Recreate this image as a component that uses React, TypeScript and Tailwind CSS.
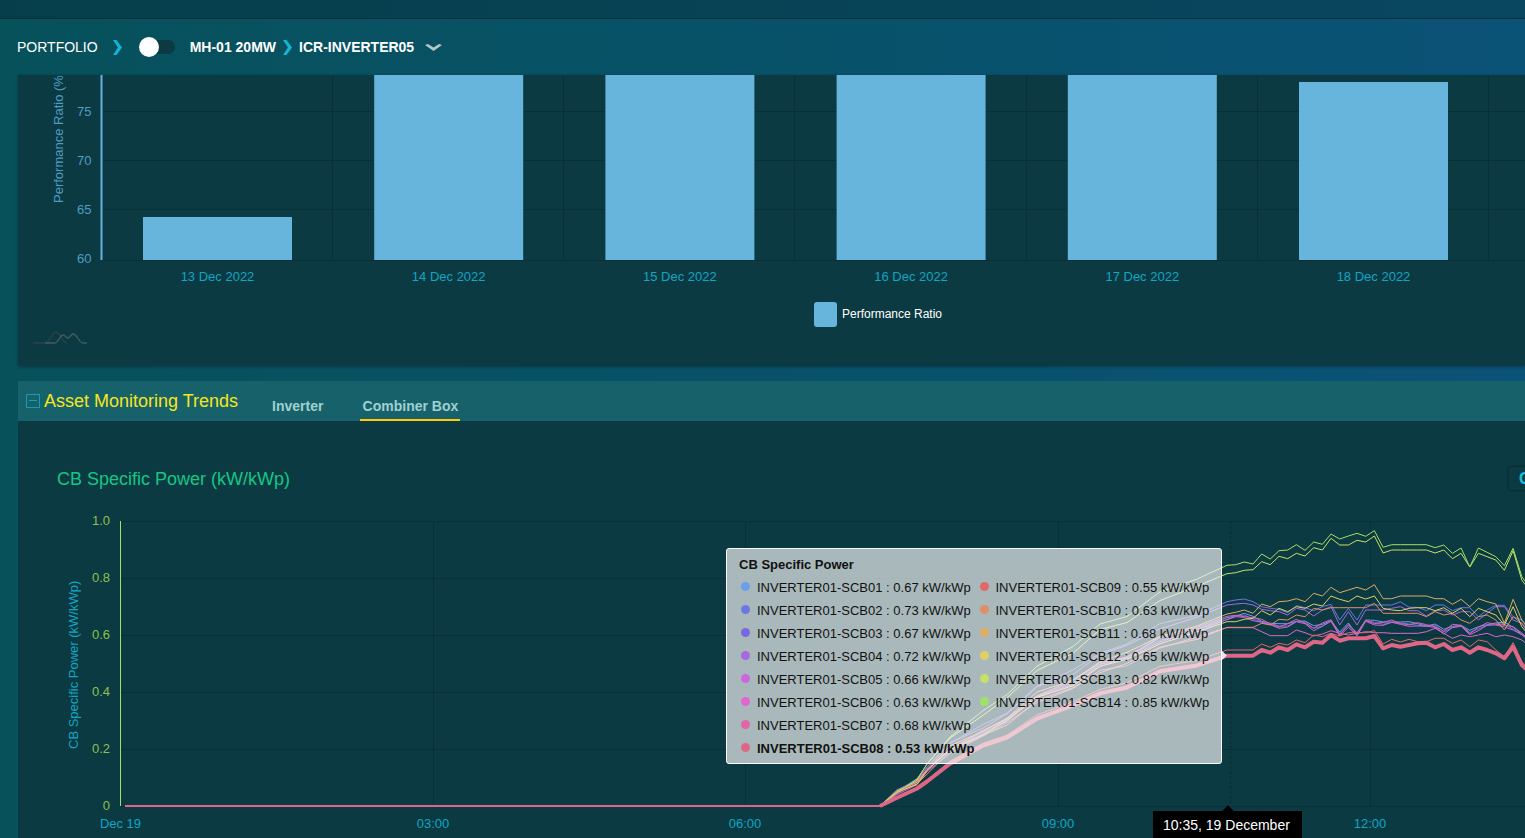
const bars = [
  { label: "13 Dec 2022", x: 143, top: 217 },
  { label: "14 Dec 2022", x: 374.2, top: 70 },
  { label: "15 Dec 2022", x: 605.4, top: 70 },
  { label: "16 Dec 2022", x: 836.6, top: 70 },
  { label: "17 Dec 2022", x: 1067.8, top: 70 },
  { label: "18 Dec 2022", x: 1299, top: 82 },
];

// pixel y of the readings, taken 3x larger from the chart, one every 5 minutes from 10:35
const mid = [470, 466, 464, 470, 480, 490, 495, 490, 480, 485, 500, 490, 480, 520, 490, 520, 480, 485, 485, 482, 488, 488, 488, 495, 495, 510, 495, 495, 515, 500, 490, 490, 490, 500, 520, 540];

const shifted = (dy: number, seed: number) =>
  mid.map((v, i) => Math.round(v + dy + Math.sin(i * 1.7 + seed) * 4));

const series = [
  { name: "INVERTER01-SCB01", value: "0.67", color: "#6d9eeb", dot: "bg-[#6d9eeb]", ys: shifted(0, 1) },
  { name: "INVERTER01-SCB02", value: "0.73", color: "#6a78e0", dot: "bg-[#6a78e0]", ys: [425, 420, 417, 425, 440, 445, 448, 458, 437, 443, 452, 440, 433, 480, 445, 480, 435, 435, 435, 435, 425, 442, 442, 452, 435, 435, 452, 443, 443, 470, 450, 436, 436, 470, 480, 520] },
  { name: "INVERTER01-SCB03", value: "0.67", color: "#7b68e0", dot: "bg-[#7b68e0]", ys: shifted(4, 2) },
  { name: "INVERTER01-SCB04", value: "0.72", color: "#a868e0", dot: "bg-[#a868e0]", ys: [435, 432, 430, 435, 448, 452, 455, 465, 445, 450, 468, 450, 440, 495, 455, 495, 450, 450, 450, 445, 440, 452, 452, 468, 452, 450, 465, 455, 455, 480, 460, 440, 440, 480, 490, 530] },
  { name: "INVERTER01-SCB05", value: "0.66", color: "#cc66e0", dot: "bg-[#cc66e0]", ys: shifted(8, 3) },
  { name: "INVERTER01-SCB06", value: "0.63", color: "#e066d0", dot: "bg-[#e066d0]", ys: [503, 503, 503, 503, 515, 527, 527, 527, 510, 518, 528, 522, 512, 520, 525, 520, 515, 518, 518, 520, 520, 520, 520, 515, 505, 520, 535, 525, 530, 525, 520, 530, 525, 530, 540, 560] },
  { name: "INVERTER01-SCB07", value: "0.68", color: "#e066a8", dot: "bg-[#e066a8]", ys: shifted(2, 4) },
  { name: "INVERTER01-SCB09", value: "0.55", color: "#e06a6a", dot: "bg-[#e06a6a]", ys: [570, 570, 570, 570, 552, 562, 550, 555, 540, 548, 525, 530, 520, 528, 518, 518, 518, 512, 552, 538, 546, 538, 545, 545, 535, 535, 550, 540, 560, 540, 545, 570, 590, 548, 605, 630] },
  { name: "INVERTER01-SCB10", value: "0.63", color: "#e08e66", dot: "bg-[#e08e66]", ys: [502, 502, 502, 502, 490, 495, 478, 480, 465, 470, 445, 450, 443, 443, 443, 443, 443, 430, 460, 460, 460, 460, 460, 470, 455, 465, 460, 480, 490, 470, 465, 480, 510, 470, 490, 520] },
  { name: "INVERTER01-SCB11", value: "0.68", color: "#e0ab66", dot: "bg-[#e0ab66]", ys: [462, 457, 450, 460, 432, 440, 425, 423, 416, 425, 400, 408, 382, 398, 390, 382, 390, 374, 416, 416, 408, 408, 408, 408, 416, 416, 433, 418, 440, 416, 425, 432, 490, 418, 480, 510] },
  { name: "INVERTER01-SCB12", value: "0.65", color: "#e0d066", dot: "bg-[#e0d066]", ys: [485, 485, 478, 475, 452, 465, 445, 455, 440, 445, 432, 438, 408, 418, 425, 408, 417, 408, 445, 450, 452, 445, 443, 443, 452, 443, 460, 445, 470, 445, 455, 465, 495, 440, 500, 530] },
  { name: "INVERTER01-SCB13", value: "0.82", color: "#c8e066", dot: "bg-[#c8e066]", ys: [341, 338, 331, 329, 305, 314, 289, 296, 280, 288, 263, 270, 235, 255, 255, 241, 246, 228, 279, 270, 270, 270, 270, 270, 279, 270, 296, 280, 321, 280, 290, 300, 331, 272, 360, 395] },
  { name: "INVERTER01-SCB14", value: "0.85", color: "#a3e066", dot: "bg-[#a3e066]", ys: [316, 314, 306, 312, 282, 297, 272, 270, 254, 271, 246, 253, 222, 237, 228, 220, 229, 212, 262, 254, 254, 254, 254, 254, 263, 255, 280, 264, 321, 264, 277, 290, 317, 265, 350, 385] },
  { name: "INVERTER01-SCB08", value: "0.53", color: "#e06685", dot: "bg-[#e06685]", bold: true, ys: [587, 587, 587, 587, 570, 578, 562, 570, 553, 562, 545, 548, 525, 542, 535, 535, 535, 528, 565, 555, 560, 555, 550, 548, 562, 552, 570, 562, 578, 562, 570, 580, 595, 560, 615, 640] },
];

const ramp = [
  [880, 806], [897, 797], [917, 790], [927, 781], [950, 763], [983, 747], [1007, 737],
  [1037, 718], [1073, 707], [1100, 693], [1127, 687], [1160, 673], [1197, 665],
];
const bump = [0, 6, 10, 12, 8];

const linePoints = (ys: number[], seed: number) => {
  const start = 460 + ys[0] / 3;
  const spread = (806 - start) / 150 - 1;
  const rising = ramp.map(([x, y], i) => {
    const f = (806 - y) / 150;
    // the lines stay bunched at sunrise and fan out later
    const fan = Math.min(1, Math.max(0, (f - 0.1) / 0.25));
    const rise = 150 * f * (1 + spread * fan) + (bump[i] ?? 0) * Math.min(1, spread * 3);
    const wobble = i === 0 ? 0 : Math.sin(i * 2.1 + seed) * 1.4;
    return `${x},${(806 - rise + wobble).toFixed(1)}`;
  });
  const after = ys.map((v, i) => `${(1227 + i * 8.67).toFixed(1)},${(460 + v / 3).toFixed(1)}`);
  return [...rising, ...after].join(" ");
};

const tooltipOrder = ["01", "02", "03", "04", "05", "06", "07", "08"];
const firstColumn = tooltipOrder.map((n) => series.find((s) => s.name.endsWith(n))!);
const secondColumn = series.filter((s) => s.name >= "INVERTER01-SCB09");

const TooltipRow = ({ item }: { item: (typeof series)[number] }) => (
  <div className={`flex h-[23px] items-center whitespace-nowrap pl-[2px] ${item.bold ? "font-bold" : ""}`}>
    <span className={`mr-[7px] h-[9px] w-[9px] -translate-y-[1px] rounded-full ${item.dot}`} />
    {item.name} : {item.value} kW/kWp
  </div>
);

const Chevron = ({ className }: { className: string }) => (
  <svg width="9" height="15" viewBox="0 0 9 15" className={className}>
    <path d="M0 0h3.500l5.500 7.500-5.500 7.500h-3.500l5-7.500z" fill="#12b5d4" />
  </svg>
);

const PerformanceChart = () => (
  <svg width="1507" height="291" viewBox="18 75 1507 291" className="block">
    {[111, 160, 209, 260].map((y) => (
      <line key={y} x1="102" x2="1525" y1={y + 0.5} y2={y + 0.5} stroke="#0a2f36" />
    ))}
    {[332, 563, 794, 1026, 1257, 1488].map((x) => (
      <line key={x} x1={x + 0.5} x2={x + 0.5} y1="75" y2="260" stroke="#0a2f36" />
    ))}
    <line x1="101.500" x2="101.500" y1="75" y2="260" stroke="#67b5dc" strokeWidth="2" />
    {bars.map((b) => (
      <g key={b.label}>
        <rect x={b.x} y={b.top} width="149" height={260 - b.top} fill="#67b5dc" />
        <text x={b.x + 74.5} y="281" textAnchor="middle" fontSize="13" fill="#12a5c4">
          {b.label}
        </text>
      </g>
    ))}
    {[
      ["75", 116],
      ["70", 165],
      ["65", 214],
      ["60", 263],
    ].map(([label, y]) => (
      <text key={label} x="91.500" y={y} textAnchor="end" fontSize="13" fill="#4f9cc4">
        {label}
      </text>
    ))}
    <text transform="translate(63 203) rotate(-90)" fontSize="13" fill="#4f9cc4">
      Performance Ratio (%)
    </text>
    <rect x="814" y="302" width="23" height="25" rx="3" fill="#67b5dc" />
    <text x="842" y="318" fontSize="12" fill="#ffffff">
      Performance Ratio
    </text>
    <g fill="none" strokeWidth="1.3">
      <path d="M33 343H45C50 343 52 332 56 332C60 332 62 343 67 343" stroke="#2b4349" />
      <path d="M45 343H55C58 343 60 335 63 335C65 335 66 338 68 338C70 338 71 334 73 334C77 334 79 343 83 343H87" stroke="#465c61" />
    </g>
  </svg>
);

const SpecificPowerChart = () => (
  <svg width="1507" height="338" viewBox="18 500 1507 338" className="block">
    {[521, 578, 635, 692, 749, 806].map((y) => (
      <line key={y} x1="121" x2="1525" y1={y + 0.5} y2={y + 0.5} stroke="#0a2f36" />
    ))}
    {[433, 745, 1058, 1370].map((x) => (
      <line key={x} x1={x + 0.5} x2={x + 0.5} y1="521" y2="806" stroke="#0a2f36" />
    ))}
    <line x1="120.500" x2="120.500" y1="521" y2="806" stroke="#a3e066" />
    {[
      ["1.0", 525],
      ["0.8", 582],
      ["0.6", 639],
      ["0.4", 696],
      ["0.2", 753],
      ["0", 810],
    ].map(([label, y]) => (
      <text key={label} x="110" y={y} textAnchor="end" fontSize="13" fill="#8dc04f">
        {label}
      </text>
    ))}
    <text transform="translate(78 749) rotate(-90)" fontSize="13" fill="#12a5c4">
      CB Specific Power (kW/kWp)
    </text>
    {[
      ["Dec 19", 120.5],
      ["03:00", 433],
      ["06:00", 745],
      ["09:00", 1058],
      ["12:00", 1370],
    ].map(([label, x]) => (
      <text key={label} x={x} y="828" textAnchor="middle" fontSize="13" fill="#12a5c4">
        {label}
      </text>
    ))}
    <line x1="1230.500" x2="1230.500" y1="521" y2="806" stroke="#0a2f36" strokeWidth="1.5" strokeDasharray="3 2" />
    <line x1="125" x2="881" y1="806" y2="806" stroke="#e06685" strokeWidth="2" />
    {series.map((s, i) => (
      <polyline
        key={s.name}
        points={linePoints(s.ys, i)}
        fill="none"
        stroke={s.color}
        strokeWidth={s.bold ? 4 : 1}
        strokeLinejoin="round"
      />
    ))}
  </svg>
);

export default function App() {
  return (
    <div className="h-[838px] w-[1525px] overflow-hidden bg-gradient-to-r from-[#07515b] to-[#0b5277] font-['Liberation_Sans',Arial,sans-serif] text-white">
      <div className="h-[19px] border-b border-[#0a2f36] bg-gradient-to-r from-[#063f4b] to-[#094660]" />

      <header className="flex h-[56px] items-center pl-[17px] text-sm">
        <span>PORTFOLIO</span>
        <Chevron className="ml-[15px]" />
        <div className="relative ml-[18px] h-[14px] w-[35px] rounded-full bg-[#0b3a42]">
          <span className="absolute left-[-1px] top-[-3px] h-[20px] w-[20px] rounded-full bg-white" />
        </div>
        <span className="ml-[15px] font-bold">MH-01 20MW</span>
        <Chevron className="ml-[7px]" />
        <span className="ml-[7px] font-bold">ICR-INVERTER05</span>
        <svg width="17" height="7" viewBox="0 0 17 7" className="ml-[11px] text-[#b9c6c8]">
          <path d="M0 1l3-1 5.500 3.500 5.500-3.500 3 1-8.500 6z" fill="currentColor" />
        </svg>
      </header>

      <div className="pl-[18px]">
        <section className="h-[291px] overflow-hidden bg-[#0b3a42] shadow-[0_1px_3px_rgba(0,0,0,0.3)]">
          <PerformanceChart />
        </section>

        <section className="mt-[15px]">
          <div className="flex h-[40px] items-stretch bg-[#17626a]">
            <div className="ml-[8px] flex items-center pb-[1px]">
              <span className="flex h-[14px] w-[14px] items-center justify-center border border-[#12a0b0]">
                <span className="h-[1px] w-[8px] bg-[#12a0b0]" />
              </span>
            </div>
            <h2 className="ml-[4px] flex items-center pb-[1px] text-lg text-[#f5e61e]">Asset Monitoring Trends</h2>
            <nav className="ml-[32px] flex text-sm font-bold text-[#9fd0d0]">
              <span className="flex items-center px-[2px] pt-[10px]">Inverter</span>
              <span className="ml-[35px] flex w-[100px] items-center justify-center border-b-2 border-[#ffcc00] pt-[12px]">
                Combiner Box
              </span>
            </nav>
          </div>

          <div className="relative h-[417px] overflow-hidden bg-[#0b3a42]">
            <div className="flex h-[79px] items-start justify-between pl-[39px] pt-[46px]">
              <h3 className="text-lg leading-6 text-[#16c784]">CB Specific Power (kW/kWp)</h3>
              <span className="mr-[-20px] w-[36px] rounded-l-[3px] pl-[10px] text-base font-bold leading-[23px] text-[#12c0e0] shadow-[0_0_3px_rgba(0,0,0,0.6)]">
                C
              </span>
            </div>
            <SpecificPowerChart />

            <div className="absolute left-[708px] top-[127px] h-[216px] w-[496px] rounded-[3px] border border-white bg-[rgba(247,247,247,0.67)] pl-[12px] pt-[6px] text-[13px] text-[#111]">
              <div className="mb-[3px] h-[18px] font-bold">CB Specific Power</div>
              <div className="flex">
                <div className="w-[238.500px]">
                  {firstColumn.map((s) => (
                    <TooltipRow key={s.name} item={s} />
                  ))}
                </div>
                <div>
                  {secondColumn.map((s) => (
                    <TooltipRow key={s.name} item={s} />
                  ))}
                </div>
              </div>
              <span className="absolute right-[-6px] top-[102px] h-[9px] w-[5px] bg-[#f4e4e8] [clip-path:polygon(0_0,100%_50%,0_100%)]" />
            </div>

            <div className="absolute left-[1135px] top-[390px] h-[30px] w-[149px] bg-black pl-[10px] pt-[4px] text-sm text-white">
              10:35, 19 December
              <span className="absolute left-[71px] top-[-4px] h-[8px] w-[8px] rotate-45 bg-black" />
            </div>
          </div>
        </section>
      </div>
    </div>
  );
}
